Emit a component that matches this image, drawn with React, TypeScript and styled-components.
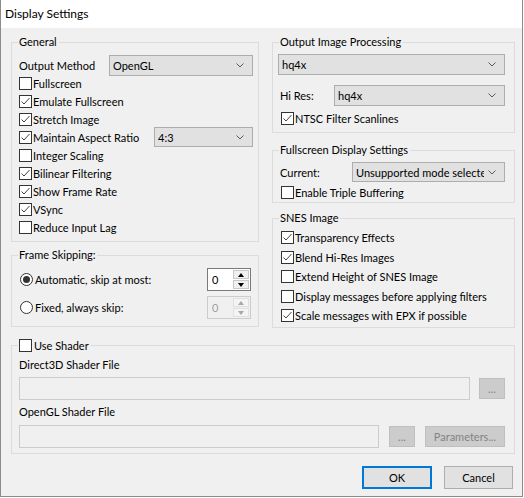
import React from 'react';
import styled, { createGlobalStyle } from 'styled-components';

const Global = createGlobalStyle`
  html, body { margin: 0; padding: 0; background: #ffffff; }
  body { font-family: Lato, "Liberation Sans", sans-serif; font-size: 11px; color: #000; }
  * { box-sizing: border-box; }
`;

const Window = styled.div`
  width: 523px;
  height: 497px;
  background: #f0f0f0;
  border: 1px solid #8c8c8c;
  border-top: none;
  display: flex;
  flex-direction: column;
`;

const TitleBar = styled.div`
  height: 28px;
  flex: none;
  background: #ffffff;
  padding: 0 0 2px 4px;
  display: flex;
  align-items: center;
  font-size: 12px;
`;

const Body = styled.div`
  padding: 14px 7px 0 10px;
  display: flex;
  flex-direction: column;
`;

const Columns = styled.div`
  display: grid;
  grid-template-columns: 248px 243px;
  column-gap: 13px;
  align-items: start;
`;

const Column = styled.div`
  display: flex;
  flex-direction: column;
`;

const Group = styled.div<{ $h: number; $mt?: number; $pad: string }>`
  position: relative;
  height: ${p => p.$h}px;
  margin-top: ${p => p.$mt ?? 0}px;
  border: 1px solid #dcdcdc;
  padding: ${p => p.$pad};
  display: flex;
  flex-direction: column;
`;

const Legend = styled.div<{ $top?: number }>`
  position: absolute;
  top: ${p => p.$top ?? -9}px;
  left: 6px;
  height: 15px;
  line-height: 15px;
  padding: 0 2px 0 1px;
  background: #f0f0f0;
  white-space: nowrap;
  display: flex;
  align-items: center;
`;

const FieldRow = styled.div<{ $h: number; $cols: string; $mt?: number }>`
  display: grid;
  grid-template-columns: ${p => p.$cols};
  align-items: center;
  height: ${p => p.$h}px;
  margin-top: ${p => p.$mt ?? 0}px;
`;

const Label = styled.span<{ $pl?: number }>`
  padding-left: ${p => p.$pl ?? 0}px;
  white-space: nowrap;
  line-height: 15px;
`;

const ComboBox = styled.div<{ $h: number }>`
  height: ${p => p.$h}px;
  background: #e1e1e1;
  border: 1px solid #adadad;
  display: flex;
  align-items: center;
  padding-left: 3px;
  min-width: 0;
`;

const ComboText = styled.span`
  flex: 1;
  min-width: 0;
  overflow: hidden;
  white-space: nowrap;
  line-height: 15px;
`;

const ComboArrow = styled.svg`
  flex: none;
  margin: 0 8px 0 4px;
`;

function Combo({ value, h = 21 }: { value: string; h?: number }) {
  return (
    <ComboBox $h={h}>
      <ComboText>{value}</ComboText>
      <ComboArrow width="8" height="5" viewBox="0 0 8 5">
        <polyline points="0.5,0.5 4,4 7.5,0.5" fill="none" stroke="#5a5a5a" strokeWidth="1" />
      </ComboArrow>
    </ComboBox>
  );
}

const CheckList = styled.div<{ $mt?: number }>`
  display: flex;
  flex-direction: column;
  margin-top: ${p => p.$mt ?? 0}px;
`;

const CheckRow = styled.div<{ $h?: number; $pl?: number; $mt?: number }>`
  display: flex;
  align-items: center;
  height: ${p => p.$h ?? 18}px;
  padding-left: ${p => p.$pl ?? 0}px;
  margin-top: ${p => p.$mt ?? 0}px;
`;

const Box = styled.span`
  width: 13px;
  height: 13px;
  flex: none;
  border: 1px solid #333333;
  background: #ffffff;
  display: inline-flex;
  align-items: center;
  justify-content: center;
`;

const CheckText = styled.span<{ $gap?: number }>`
  margin-left: ${p => p.$gap ?? 1}px;
  white-space: nowrap;
  line-height: 15px;
`;

function CheckBox({ checked }: { checked: boolean }) {
  return (
    <Box>
      {checked && (
        <svg width="11" height="11" viewBox="0 0 11 11">
          <polyline points="1.5,5.5 4,8 9.5,2" fill="none" stroke="#444" strokeWidth="1" />
        </svg>
      )}
    </Box>
  );
}

function Check({ label, checked, gap }: { label: string; checked: boolean; gap?: number }) {
  return (
    <>
      <CheckBox checked={checked} />
      <CheckText $gap={gap}>{label}</CheckText>
    </>
  );
}

const AspectRow = styled.div`
  display: grid;
  grid-template-columns: 135px 1fr;
  align-items: center;
  height: 18px;
`;

const AspectCheck = styled.div`
  display: flex;
  align-items: center;
`;

const ComboOverflow = styled.div`
  margin: -1px 0;
`;

const SpinRow = styled.div<{ $mt?: number }>`
  display: flex;
  align-items: center;
  justify-content: space-between;
  height: 23px;
  margin-top: ${p => p.$mt ?? 0}px;
`;

const RadioWrap = styled.div`
  display: flex;
  align-items: center;
`;

const RadioCircle = styled.span<{ $on: boolean }>`
  width: 13px;
  height: 13px;
  flex: none;
  border-radius: 50%;
  border: 1px solid #333333;
  background: #ffffff;
  display: inline-flex;
  align-items: center;
  justify-content: center;
  &::after {
    content: '';
    width: 7px;
    height: 7px;
    border-radius: 50%;
    background: #333333;
    display: ${p => (p.$on ? 'block' : 'none')};
  }
`;

const Spin = styled.div<{ $disabled?: boolean }>`
  width: 44px;
  height: 23px;
  border: 1px solid ${p => (p.$disabled ? '#cccccc' : '#7a7a7a')};
  background: ${p => (p.$disabled ? '#f0f0f0' : '#ffffff')};
  display: flex;
`;

const SpinValue = styled.span<{ $disabled?: boolean }>`
  flex: 1;
  padding-left: 4px;
  line-height: 21px;
  color: ${p => (p.$disabled ? '#a0a0a0' : '#000')};
`;

const SpinButtons = styled.div`
  width: 17px;
  display: flex;
  flex-direction: column;
  padding: 1px 1px 1px 0;
  gap: 1px;
`;

const SpinBtn = styled.div<{ $disabled?: boolean }>`
  flex: 1;
  border: 1px solid ${p => (p.$disabled ? '#e0e0e0' : '#c8c8c8')};
  background: ${p => (p.$disabled ? '#f4f4f4' : '#f0f0f0')};
  display: flex;
  align-items: center;
  justify-content: center;
`;

const Tri = styled.span<{ $down?: boolean; $disabled?: boolean }>`
  width: 0;
  height: 0;
  border-left: 3.5px solid transparent;
  border-right: 3.5px solid transparent;
  ${p =>
    p.$down
      ? `border-top: 4px solid ${p.$disabled ? '#a8a8a8' : '#000'};`
      : `border-bottom: 4px solid ${p.$disabled ? '#a8a8a8' : '#000'};`}
`;

function SpinBox({ disabled }: { disabled?: boolean }) {
  return (
    <Spin $disabled={disabled}>
      <SpinValue $disabled={disabled}>0</SpinValue>
      <SpinButtons>
        <SpinBtn $disabled={disabled}>
          <Tri $disabled={disabled} />
        </SpinBtn>
        <SpinBtn $disabled={disabled}>
          <Tri $down $disabled={disabled} />
        </SpinBtn>
      </SpinButtons>
    </Spin>
  );
}

const FileLabel = styled.div<{ $mt?: number }>`
  height: 15px;
  line-height: 15px;
  margin-top: ${p => p.$mt ?? 0}px;
  white-space: nowrap;
`;

const FileRow = styled.div<{ $mt?: number; $gap: number }>`
  display: flex;
  align-items: center;
  height: 23px;
  gap: ${p => p.$gap}px;
  margin-top: ${p => p.$mt ?? 0}px;
`;

const FileInput = styled.div`
  flex: 1;
  height: 23px;
  border: 1px solid #cccccc;
  background: #f0f0f0;
`;

const DisabledButton = styled.div<{ $w: number }>`
  width: ${p => p.$w}px;
  height: 21px;
  flex: none;
  background: #cccccc;
  border: 1px solid #bfbfbf;
  color: #838383;
  display: flex;
  align-items: center;
  justify-content: center;
  white-space: nowrap;
`;

const ButtonRow = styled.div`
  display: flex;
  justify-content: flex-end;
  gap: 12px;
  margin-top: 12px;
  padding-right: 2px;
`;

const DialogButton = styled.div<{ $w: number; $default?: boolean }>`
  width: ${p => p.$w}px;
  height: 23px;
  background: #e1e1e1;
  border: ${p => (p.$default ? '2px solid #0078d7' : '1px solid #adadad')};
  display: flex;
  align-items: center;
  justify-content: center;
`;

export default function App() {
  return (
    <>
      <Global />
      <Window>
        <TitleBar>Display Settings</TitleBar>
        <Body>
          <Columns>
            <Column>
              <Group $h={200} $pad="12px 5px 0 7px">
                <Legend>General</Legend>
                <FieldRow $h={21} $cols="90px 1fr">
                  <Label>Output Method</Label>
                  <Combo value="OpenGL" />
                </FieldRow>
                <CheckList $mt={-2}>
                  <CheckRow><Check label="Fullscreen" checked={false} /></CheckRow>
                  <CheckRow><Check label="Emulate Fullscreen" checked /></CheckRow>
                  <CheckRow><Check label="Stretch Image" checked /></CheckRow>
                  <AspectRow>
                    <AspectCheck><Check label="Maintain Aspect Ratio" checked /></AspectCheck>
                    <ComboOverflow><Combo value="4:3" h={20} /></ComboOverflow>
                  </AspectRow>
                  <CheckRow><Check label="Integer Scaling" checked={false} /></CheckRow>
                  <CheckRow><Check label="Bilinear Filtering" checked /></CheckRow>
                  <CheckRow><Check label="Show Frame Rate" checked /></CheckRow>
                  <CheckRow><Check label="VSync" checked /></CheckRow>
                  <CheckRow><Check label="Reduce Input Lag" checked={false} /></CheckRow>
                </CheckList>
              </Group>
              <Group $h={72} $mt={13} $pad="12px 7px 0 8px">
                <Legend>Frame Skipping:</Legend>
                <SpinRow>
                  <RadioWrap>
                    <RadioCircle $on />
                    <CheckText $gap={2}>Automatic, skip at most:</CheckText>
                  </RadioWrap>
                  <SpinBox />
                </SpinRow>
                <SpinRow $mt={5}>
                  <RadioWrap>
                    <RadioCircle $on={false} />
                    <CheckText $gap={2}>Fixed, always skip:</CheckText>
                  </RadioWrap>
                  <SpinBox disabled />
                </SpinRow>
              </Group>
            </Column>
            <Column>
              <Group $h={91} $pad="11px 9px 0 5px">
                <Legend>Output Image Processing</Legend>
                <Combo value="hq4x" />
                <FieldRow $h={21} $cols="56px 1fr" $mt={10}>
                  <Label $pl={2}>Hi Res:</Label>
                  <Combo value="hq4x" />
                </FieldRow>
                <CheckRow $mt={3} $pl={3}><Check label="NTSC Filter Scanlines" checked /></CheckRow>
              </Group>
              <Group $h={53} $mt={17} $pad="11px 9px 0 5px">
                <Legend>Fullscreen Display Settings</Legend>
                <FieldRow $h={20} $cols="74px 1fr">
                  <Label $pl={2}>Current:</Label>
                  <Combo value="Unsupported mode selected" h={20} />
                </FieldRow>
                <CheckRow $mt={1} $pl={3}><Check label="Enable Triple Buffering" checked={false} /></CheckRow>
              </Group>
              <Group $h={110} $mt={15} $pad="9px 9px 0 8px">
                <Legend>SNES Image</Legend>
                <CheckRow $h={19.5}><Check label="Transparency Effects" checked /></CheckRow>
                <CheckRow $h={19.5}><Check label="Blend Hi-Res Images" checked /></CheckRow>
                <CheckRow $h={19.5}><Check label="Extend Height of SNES Image" checked={false} /></CheckRow>
                <CheckRow $h={19.5}><Check label="Display messages before applying filters" checked={false} /></CheckRow>
                <CheckRow $h={19.5}><Check label="Scale messages with EPX if possible" checked /></CheckRow>
              </Group>
            </Column>
          </Columns>
          <Group $h={109} $mt={17} $pad="11px 9px 0 7px">
            <Legend $top={-8}><Check label="Use Shader" checked={false} gap={2} /></Legend>
            <FileLabel>Direct3D Shader File</FileLabel>
            <FileRow $mt={5} $gap={9}>
              <FileInput />
              <DisabledButton $w={26}>...</DisabledButton>
            </FileRow>
            <FileLabel $mt={4}>OpenGL Shader File</FileLabel>
            <FileRow $mt={6} $gap={10}>
              <FileInput />
              <DisabledButton $w={26}>...</DisabledButton>
              <DisabledButton $w={80}>Parameters...</DisabledButton>
            </FileRow>
          </Group>
          <ButtonRow>
            <DialogButton $w={70} $default>OK</DialogButton>
            <DialogButton $w={69}>Cancel</DialogButton>
          </ButtonRow>
        </Body>
      </Window>
    </>
  );
}
